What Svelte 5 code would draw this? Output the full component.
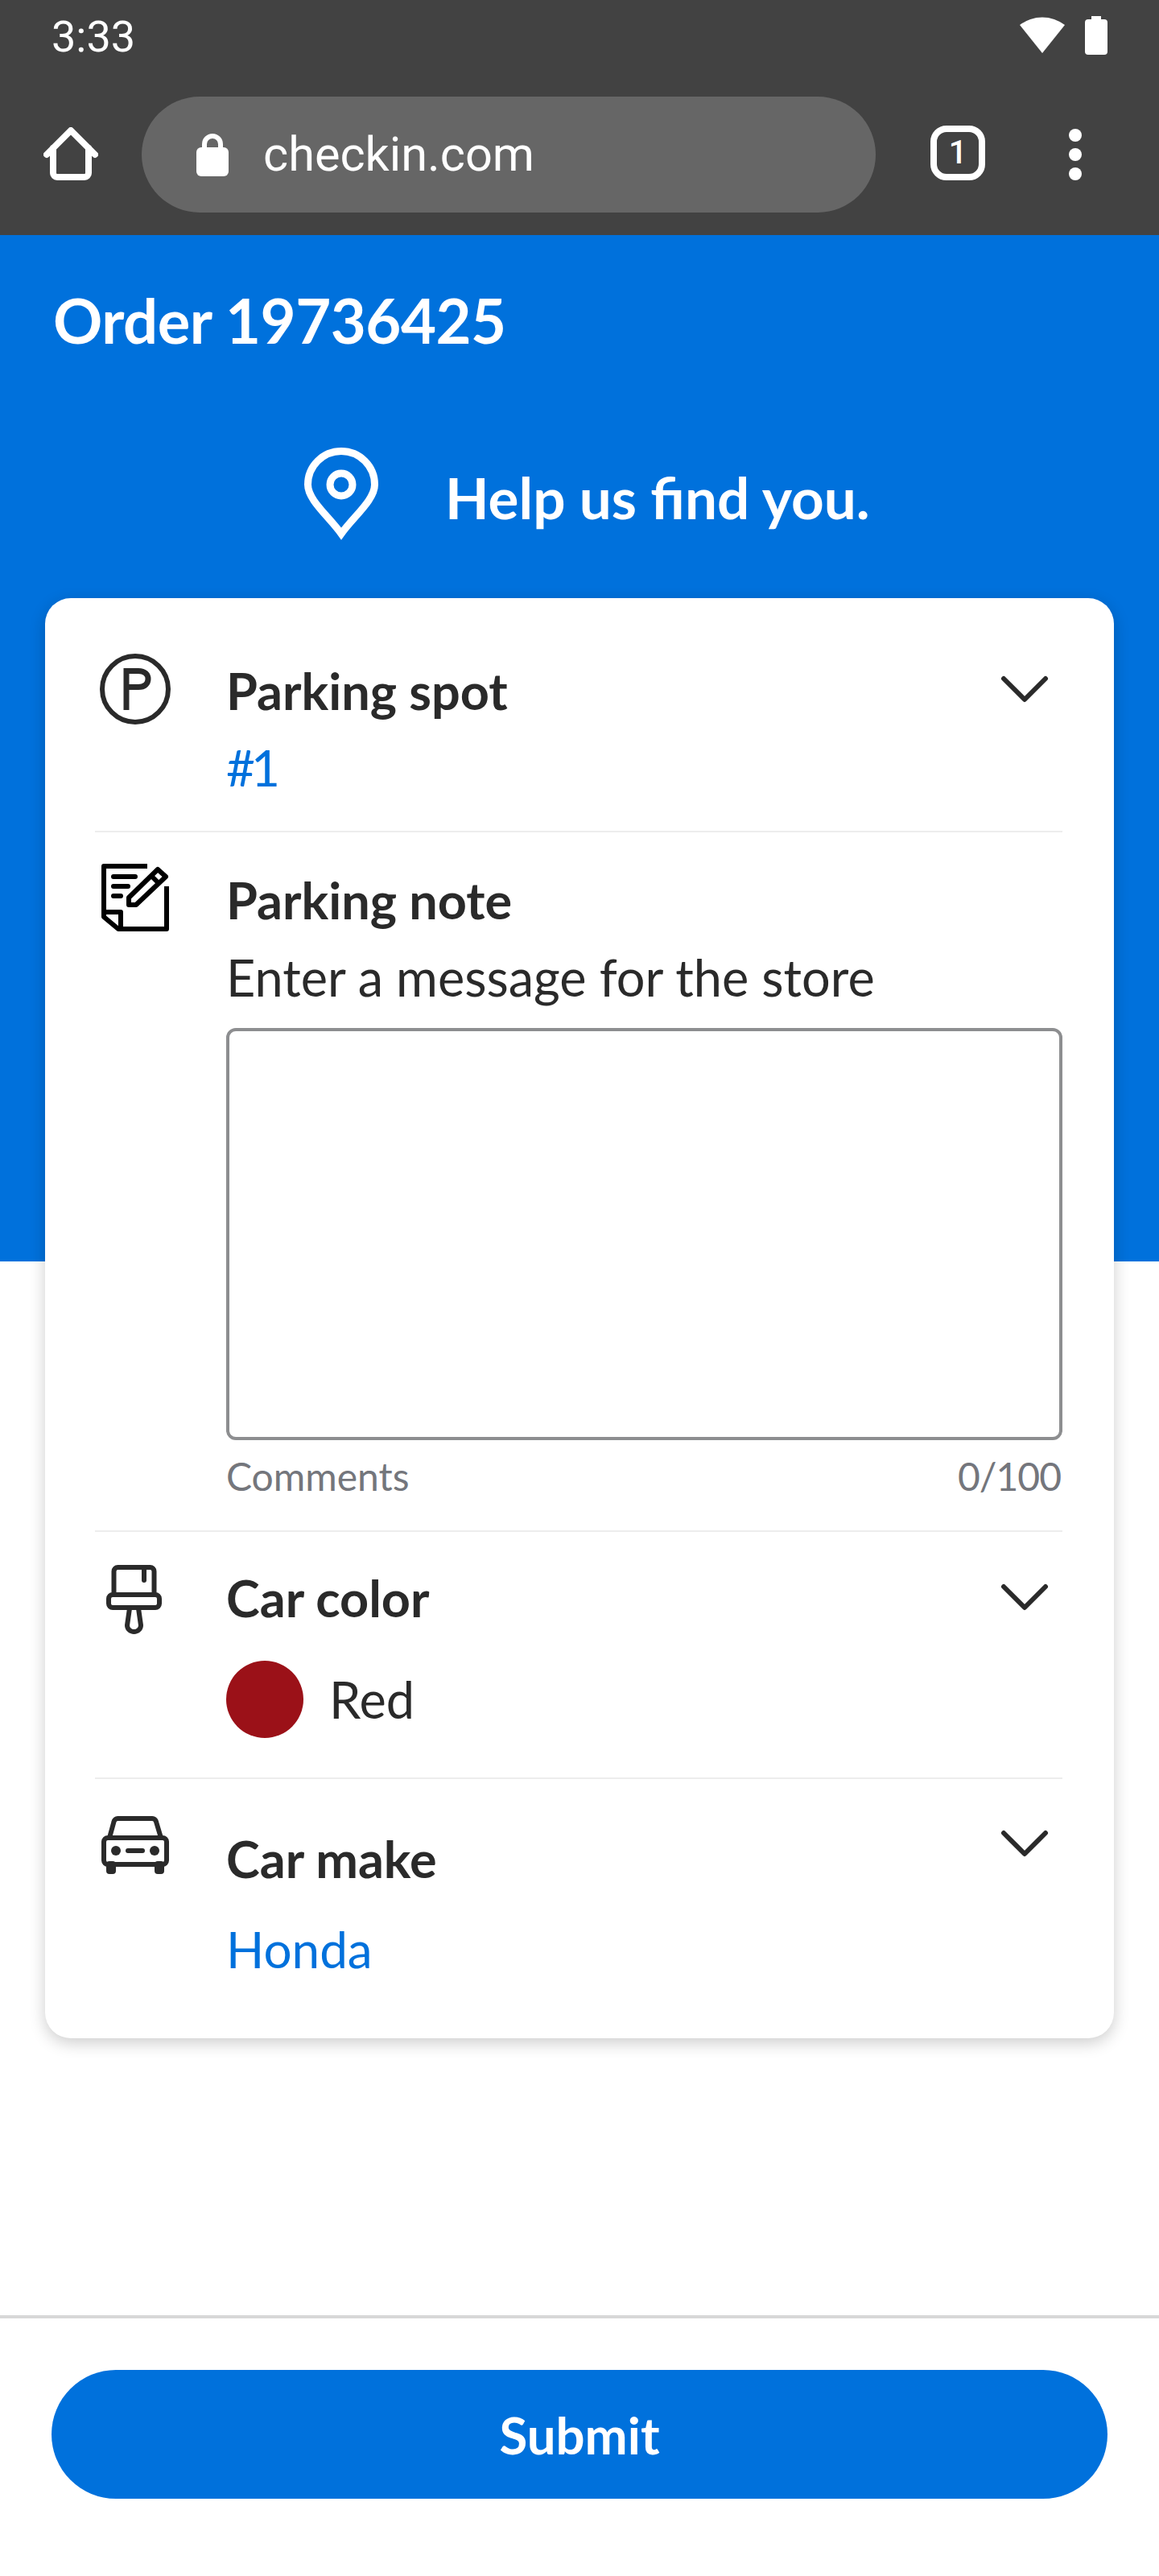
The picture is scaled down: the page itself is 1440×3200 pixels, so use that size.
<script>
	let note = $state('');
</script>

<div class="page">
	<div class="status">
		<span class="time">3:33</span>
		<div class="status-icons">
			<svg width="56" height="46" viewBox="0 0 56 46"><path d="M0 11A46 46 0 0 1 56 11L28 46Z" fill="#fff" /></svg>
			<svg width="28" height="48" viewBox="0 0 28 48"><rect y="4" width="28" height="44" rx="4" fill="#fff" /><rect x="8" width="12" height="6" fill="#fff" /></svg>
		</div>
	</div>

	<div class="toolbar">
		<svg class="home" width="68" height="66" viewBox="0 0 68 66" fill="none" stroke="#fff" stroke-width="8" stroke-linecap="round" stroke-linejoin="round">
			<path d="M4 34L34 4L64 34" />
			<path d="M12 26V57a5 5 0 0 0 5 5H51a5 5 0 0 0 5-5V26" />
		</svg>
		<div class="url">
			<svg width="40" height="53" viewBox="0 0 40 53"><path d="M10 20V13a10 10 0 0 1 20 0V20" fill="none" stroke="#fff" stroke-width="6" /><rect y="17" width="40" height="36" rx="6" fill="#fff" /></svg>
			<span>checkin.com</span>
		</div>
		<div class="tabs">1</div>
		<div class="dots"><i></i><i></i><i></i></div>
	</div>

	<main>
		<h1>Order 19736425</h1>
		<div class="help">
			<svg width="92" height="115" viewBox="0 0 92 115" fill="none" stroke="#fff" stroke-width="9">
				<path d="M46 107C30 85 4.5 65 4.5 46A41.5 41.5 0 0 1 87.5 46C87.5 65 62 85 46 107Z" />
				<circle cx="46" cy="46" r="14" />
			</svg>
			<span>Help us find you.</span>
		</div>

		<div class="card">
			<section class="row spot">
				<svg class="icon" width="88" height="88" viewBox="0 0 88 88" fill="none" stroke="#2a2a2a" stroke-width="6">
					<circle cx="44" cy="44" r="41" />
					<path d="M33 70V21.5H48C56 21.5 60 26 60 31.5C60 37 56 41.5 48 41.5H33" stroke-width="7" />
				</svg>
				<div class="body">
					<div class="label">Parking spot</div>
					<div class="value">#1</div>
				</div>
				<svg class="chevron" width="60" height="38" viewBox="0 0 60 38"><path d="M4 5L30 31L56 5" /></svg>
			</section>

			<section class="row parking-note">
				<svg class="icon" width="84" height="84" viewBox="0 0 84 84" fill="none" stroke="#000" stroke-width="6" stroke-linejoin="round">
					<path d="M57 3H3V66L21 81H81V28" />
					<path d="M3 60H24V81" />
					<path d="M15 16H42M15 28H33M15 40H24" stroke-linecap="round" />
					<path d="M70 7L80 16L43 51H34V42ZM62 15L72 25" />
				</svg>
				<div class="body wide">
					<div class="label">Parking note</div>
					<div class="hint">Enter a message for the store</div>
					<textarea bind:value={note}></textarea>
					<div class="counter">
						<span>Comments</span>
						<span class="count">{note.length}/100</span>
					</div>
				</div>
			</section>

			<section class="row color">
				<svg class="icon" width="69" height="88" viewBox="0 0 69 88" fill="none" stroke="#2a2a2a" stroke-width="6" stroke-linecap="round" stroke-linejoin="round">
					<path d="M9.5 37V8a5 5 0 0 1 5-5H54.500a5 5 0 0 1 5 5V37" />
					<rect x="3" y="37" width="63" height="16" rx="5" />
					<path d="M29 54L26 75a8.500 8 0 0 0 17 0L40 54" />
					<path d="M47 4V19" />
				</svg>
				<div class="body">
					<div class="label">Car color</div>
					<div class="swatch-line">
						<span class="swatch"></span>
						<span>Red</span>
					</div>
				</div>
				<svg class="chevron" width="60" height="38" viewBox="0 0 60 38"><path d="M4 5L30 31L56 5" /></svg>
			</section>

			<section class="row make">
				<svg class="icon" width="84" height="72" viewBox="0 0 84 72" fill="none" stroke="#2a2a2a" stroke-width="6" stroke-linejoin="round">
					<path d="M10 27L15.500 7a5 5 0 0 1 5-4H63a5 5 0 0 1 5 4L74 27" />
					<rect x="3" y="27" width="78" height="33" rx="5" />
					<path d="M33 43H51" stroke-linecap="round" />
					<g fill="#2a2a2a" stroke="none">
						<circle cx="18" cy="43" r="6" />
						<circle cx="66" cy="43" r="6" />
						<rect x="6" y="56" width="12" height="16" rx="4" />
						<rect x="66" y="56" width="12" height="16" rx="4" />
					</g>
				</svg>
				<div class="body">
					<div class="label">Car make</div>
					<div class="value">Honda</div>
				</div>
				<svg class="chevron" width="60" height="38" viewBox="0 0 60 38"><path d="M4 5L30 31L56 5" /></svg>
			</section>
		</div>
	</main>

	<footer>
		<button>Submit</button>
	</footer>
</div>

<style>
	:global(body) {
		margin: 0;
		background: #fff;
	}

	.page {
		min-height: 100vh;
		display: flex;
		flex-direction: column;
		font-family: Lato, "Open Sans", sans-serif;
		color: #2a2a2a;
	}

	.status {
		height: 120px;
		background: #424242;
		display: flex;
		justify-content: space-between;
		align-items: flex-start;
		padding: 0 64px;
		box-sizing: border-box;
		color: #fff;
	}

	.time {
		font: 400 54px/44px Roboto, sans-serif;
		margin-top: 24px;
	}

	.status-icons {
		display: flex;
		gap: 25px;
		align-items: flex-start;
		margin-top: 20px;
	}

	.toolbar {
		height: 172px;
		background: #424242;
		display: flex;
		align-items: flex-start;
		padding-left: 54px;
		box-sizing: border-box;
	}

	.home {
		margin-top: 38px;
	}

	.url {
		width: 912px;
		height: 144px;
		margin-left: 54px;
		border-radius: 72px;
		background: #666;
		display: flex;
		align-items: center;
		gap: 43px;
		padding-left: 68px;
		box-sizing: border-box;
		color: #fff;
		font: 400 59.500px Roboto, sans-serif;
	}

	.tabs {
		width: 68px;
		height: 68px;
		margin: 36px 0 0 68px;
		border: 8px solid #fff;
		border-radius: 20px;
		box-sizing: border-box;
		color: #fff;
		font: 500 40px/52px Roboto, sans-serif;
		text-align: center;
	}

	.dots {
		display: flex;
		flex-direction: column;
		gap: 8px;
		margin: 40px 0 0 104px;
	}

	.dots i {
		width: 16px;
		height: 16px;
		border-radius: 50%;
		background: #fff;
	}

	main {
		background: linear-gradient(#0071dc 1275px, #fff 0);
	}

	h1 {
		margin: 0;
		padding: 62px 0 0 66px;
		color: #fff;
		font-size: 76px;
		line-height: 88px;
		font-weight: 700;
		letter-spacing: -0.5px;
	}

	.help {
		display: flex;
		align-items: flex-start;
		justify-content: flex-start;
		gap: 83px;
		padding: 114px 0 0 378px;
		height: 187px;
		box-sizing: content-box;
		color: #fff;
		font-size: 71px;
		font-weight: 700;
		line-height: 90px;
	}

	.help span {
		margin-top: 17px;
	}

	.card {
		margin: 0 56px;
		padding: 0 64px 0 62px;
		background: #fff;
		border-radius: 32px;
		box-shadow: 0 6px 20px rgba(0, 0, 0, 0.2);
	}

	.row {
		display: grid;
		grid-template-columns: 163px 1fr auto;
		align-items: start;
		border-bottom: 2px solid #ededed;
	}

	.row:last-child {
		border-bottom: 0;
	}

	.label {
		font-size: 63px;
		line-height: 80px;
		font-weight: 700;
	}

	.value {
		font-size: 62px;
		line-height: 80px;
		color: #0071dc;
	}

	.chevron {
		margin-right: 17px;
		fill: none;
		stroke: #2a2a2a;
		stroke-width: 6;
		stroke-linecap: round;
		stroke-linejoin: round;
	}

	.spot {
		height: 289px;
	}

	.spot .body {
		padding-top: 75px;
	}

	.spot .value {
		margin-top: 15px;
		letter-spacing: -5px;
	}

	.spot .icon {
		margin: 69px 0 0 6px;
	}

	.spot .chevron {
		margin-top: 95px;
	}

	.parking-note {
		height: 867px;
	}

	.parking-note .icon {
		margin: 39px 0 0 8px;
	}

	.parking-note .body {
		padding-top: 44px;
	}

	.wide {
		grid-column: 2 / 4;
	}

	.hint {
		margin-top: 16px;
		font-size: 63px;
		line-height: 80px;
	}

	textarea {
		display: block;
		width: 100%;
		height: 512px;
		margin-top: 23px;
		border: 4px solid #8d8e90;
		border-radius: 12px;
		box-sizing: border-box;
		resize: none;
		background: #fff;
		outline: 0;
	}

	.counter {
		display: flex;
		justify-content: space-between;
		margin-top: 15px;
		padding-right: 2px;
		font-size: 48px;
		line-height: 60px;
		color: #74767c;
	}

	.count {
		letter-spacing: -1px;
	}

	.color {
		height: 305px;
	}

	.color .icon {
		margin: 41px 0 0 14px;
	}

	.color .body {
		padding-top: 42px;
	}

	.color .chevron {
		margin-top: 63px;
	}

	.swatch-line {
		display: flex;
		align-items: center;
		gap: 32px;
		margin-top: 38px;
		font-size: 63px;
		line-height: 96px;
	}

	.swatch {
		width: 96px;
		height: 96px;
		border-radius: 50%;
		background: #9b1118;
	}

	.make {
		height: 322px;
	}

	.make .icon {
		margin: 46px 0 0 8px;
	}

	.make .body {
		padding-top: 59px;
	}

	.make .chevron {
		margin-top: 62px;
	}

	.make .value {
		margin-top: 32px;
	}

	footer {
		margin-top: auto;
		border-top: 4px solid #d8d8d8;
		padding: 64px 64px 96px;
	}

	button {
		display: block;
		width: 100%;
		height: 160px;
		border: 0;
		border-radius: 80px;
		background: #0071dc;
		color: #fff;
		font: 700 63.500px Lato, sans-serif;
	}
</style>
